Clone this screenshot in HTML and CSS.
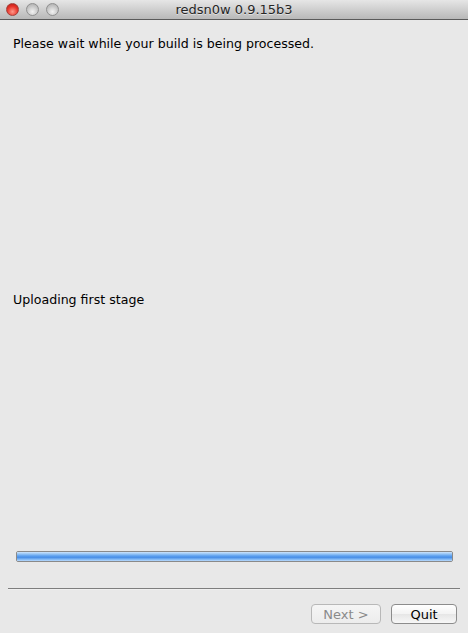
FILE: index.html
```html
<!DOCTYPE html>
<html lang="en">
<head>
  <meta charset="UTF-8">
  <title>redsn0w 0.9.15b3</title>
  <link rel="stylesheet" href="styles.css">
</head>
<body>
  <div class="window">
    <div class="titlebar">
      <div class="lights">
        <span class="light light-close"></span>
        <span class="light"></span>
        <span class="light"></span>
      </div>
      <div class="title">redsn0w 0.9.15b3</div>
    </div>

    <div class="content">
      <p class="message">Please wait while your build is being processed.</p>
      <p class="stage">Uploading first stage</p>
      <div class="progress"><div class="progress-fill"></div></div>
    </div>

    <div class="footer">
      <div class="separator"></div>
      <div class="buttons">
        <button class="btn" disabled>Next &gt;</button>
        <button class="btn">Quit</button>
      </div>
    </div>
  </div>
</body>
</html>
```

FILE: styles.css
```css
html, body {
  margin: 0;
  padding: 0;
}
body {
  font-family: "DejaVu Sans", "Liberation Sans", sans-serif;
  font-size: 12.6px;
  color: #000;
  background-color: #e8e8e8;
}
.window {
  width: 468px;
  height: 633px;
  display: flex;
  flex-direction: column;
  overflow: hidden;
}
.titlebar {
  position: relative;
  height: 19px;
  border-bottom: 1px solid #5a5a5a;
  background: linear-gradient(#e6e6e6, #cfcfcf 50%, #b8b8b8);
  display: flex;
  align-items: center;
  justify-content: center;
}
.lights {
  position: absolute;
  left: 6px;
  top: 3px;
  display: flex;
  gap: 7px;
}
.light {
  width: 13px;
  height: 13px;
  border-radius: 50%;
  box-sizing: border-box;
  border: 1px solid #8f8f8f;
  background: radial-gradient(circle at 50% 70%, #f2f2f2, #c4c4c4 60%, #a8a8a8);
}
.light-close {
  border-color: #a3403a;
  background: radial-gradient(circle at 50% 70%, #ff9a8a, #e8362c 55%, #b2150f);
}
.title {
  font-size: 13px;
  color: #262626;
  text-shadow: 0 1px 0 rgba(255, 255, 255, 0.5);
}
.content {
  flex: 1;
  display: flex;
  flex-direction: column;
  padding: 0 15px 0 13px;
}
.message {
  margin: 16px 0 0;
}
.stage {
  margin: 241px 0 0;
}
.progress {
  margin: 244px 0 0 3px;
  width: 437px;
  height: 11px;
  box-sizing: border-box;
  border: 1px solid #8a8a8a;
  border-radius: 2px;
  overflow: hidden;
}
.progress-fill {
  height: 100%;
  background: linear-gradient(#cfe5fb, #8ec0f5 25%, #5b9fee 45%, #4a8fe6 60%, #7cb5f4 80%, #b9dafc);
}
.footer {
  padding: 0 8px 9px;
}
.separator {
  height: 1px;
  background-color: #7e7e7e;
  border-bottom: 1px solid #f0f0f0;
}
.buttons {
  display: flex;
  justify-content: flex-end;
  gap: 10px;
  margin-top: 14px;
  padding-right: 3px;
}
.btn {
  font-family: "DejaVu Sans", "Liberation Sans", sans-serif;
  font-size: 13px;
  height: 20px;
  padding: 0;
  width: 70px;
  border: 1px solid #8c8c8c;
  border-radius: 4px;
  background: linear-gradient(#ffffff, #f3f3f3 50%, #e6e6e6 51%, #f7f7f7);
  color: #000;
}
.btn + .btn {
  width: 66px;
}
.btn:disabled {
  color: #8a8a8a;
  border-color: #b8b8b8;
  background: linear-gradient(#f5f5f5, #ececec);
}
```
